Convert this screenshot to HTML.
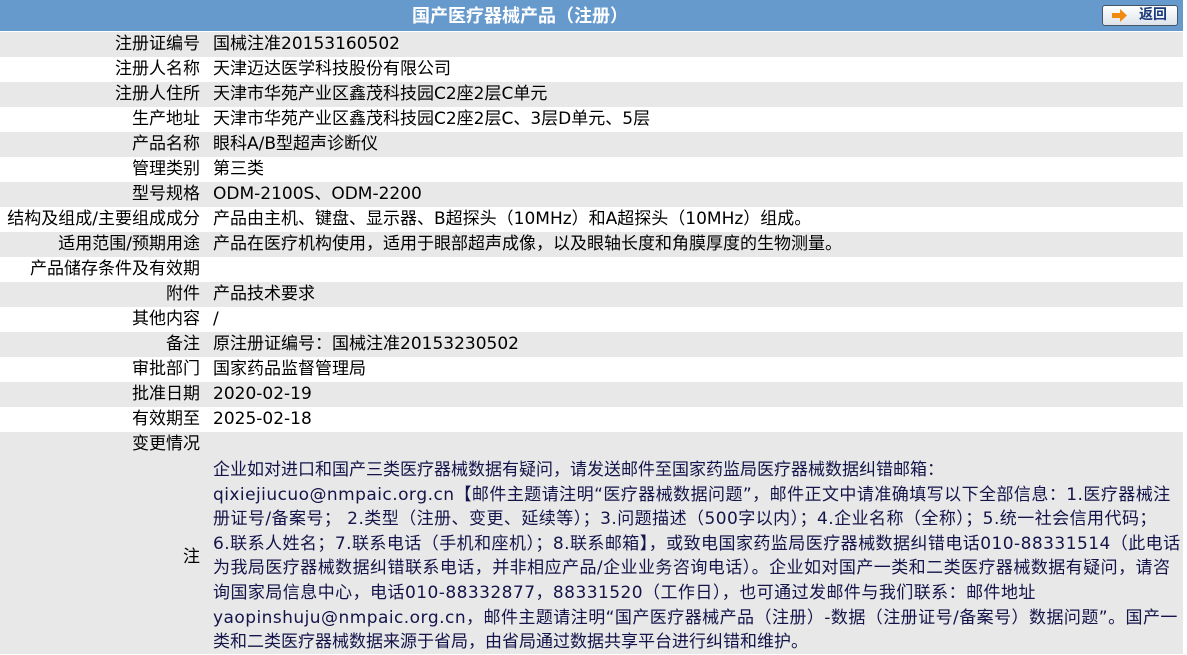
<!DOCTYPE html>
<html><head><meta charset="utf-8"><style>
body{margin:0;background:#fff;font-family:"DejaVu Sans","Noto Sans CJK SC",sans-serif;font-size:17px;color:#000;width:1187px;height:654px;overflow:hidden;position:relative;font-kerning:none}
.hd{position:absolute;left:0;top:0;width:1183px;height:31px;background:#6699cc}
.hd .t{position:absolute;left:0;width:1040px;top:0;line-height:33px;text-align:center;color:#fff;font-weight:bold;font-size:18px}
.btn{position:absolute;left:1102px;top:5px;width:76px;height:21px;border:1px solid #456;border-radius:3px;background:linear-gradient(#fff,#dde3ea);box-sizing:border-box}
.btn b{position:absolute;left:36px;top:0;line-height:19px;font-size:14px;color:#1a3a7a}
.row{position:absolute;left:0;width:1183px;height:25px;line-height:25px;white-space:nowrap}
.g{background:#e8e8e8}
.l{position:absolute;right:983px;top:0;text-align:right}
.v{position:absolute;left:213px;top:0}
.note{position:absolute;left:0;top:457px;width:1183px;height:197px;background:#e8e8e8}
.note .v{top:1px;line-height:24.6px;color:#14144a;white-space:nowrap}
.note .v span{display:block;letter-spacing:.45px}
</style></head><body>
<div class="hd"><div class="t">国产医疗器械产品（注册）</div>
<div class="btn"><svg style="position:absolute;left:9px;top:3px" width="16" height="13" viewBox="0 0 16 13"><path d="M0 4h8V0l7 6.5-7 6.5V9H0z" fill="#f08a10"/></svg><b>返回</b></div></div>
<div class="row g" style="top:32px"><span class="l">注册证编号</span><span class="v">国械注准20153160502</span></div>
<div class="row" style="top:57px"><span class="l">注册人名称</span><span class="v">天津迈达医学科技股份有限公司</span></div>
<div class="row g" style="top:82px"><span class="l">注册人住所</span><span class="v">天津市华苑产业区鑫茂科技园C2座2层C单元</span></div>
<div class="row" style="top:107px"><span class="l">生产地址</span><span class="v">天津市华苑产业区鑫茂科技园C2座2层C、3层D单元、5层</span></div>
<div class="row g" style="top:132px"><span class="l">产品名称</span><span class="v">眼科A/B型超声诊断仪</span></div>
<div class="row" style="top:157px"><span class="l">管理类别</span><span class="v">第三类</span></div>
<div class="row g" style="top:182px"><span class="l">型号规格</span><span class="v">ODM-2100S、ODM-2200</span></div>
<div class="row" style="top:207px"><span class="l">结构及组成/主要组成成分</span><span class="v">产品由主机、键盘、显示器、B超探头（10MHz）和A超探头（10MHz）组成。</span></div>
<div class="row g" style="top:232px"><span class="l">适用范围/预期用途</span><span class="v">产品在医疗机构使用，适用于眼部超声成像，以及眼轴长度和角膜厚度的生物测量。</span></div>
<div class="row" style="top:257px"><span class="l">产品储存条件及有效期</span><span class="v"></span></div>
<div class="row g" style="top:282px"><span class="l">附件</span><span class="v">产品技术要求</span></div>
<div class="row" style="top:307px"><span class="l">其他内容</span><span class="v">/</span></div>
<div class="row g" style="top:332px"><span class="l">备注</span><span class="v">原注册证编号：国械注准20153230502</span></div>
<div class="row" style="top:357px"><span class="l">审批部门</span><span class="v">国家药品监督管理局</span></div>
<div class="row g" style="top:382px"><span class="l">批准日期</span><span class="v">2020-02-19</span></div>
<div class="row" style="top:407px"><span class="l">有效期至</span><span class="v">2025-02-18</span></div>
<div class="row g" style="top:432px"><span class="l">变更情况</span><span class="v"></span></div>
<div class="note"><span class="l" style="top:88px;line-height:25px">注</span><div class="v"><span style="letter-spacing:0">企业如对进口和国产三类医疗器械数据有疑问，请发送邮件至国家药监局医疗器械数据纠错邮箱：</span><span>qixiejiucuo@nmpaic.org.cn【邮件主题请注明“医疗器械数据问题”，邮件正文中请准确填写以下全部信息：1.医疗器械注</span><span>册证号/备案号； 2.类型（注册、变更、延续等）；3.问题描述（500字以内）；4.企业名称（全称）；5.统一社会信用代码；</span><span>6.联系人姓名；7.联系电话（手机和座机）；8.联系邮箱】，或致电国家药监局医疗器械数据纠错电话010-88331514（此电话</span><span>为我局医疗器械数据纠错联系电话，并非相应产品/企业业务咨询电话）。企业如对国产一类和二类医疗器械数据有疑问，请咨</span><span>询国家局信息中心，电话010-88332877，88331520（工作日），也可通过发邮件与我们联系：邮件地址</span><span>yaopinshuju@nmpaic.org.cn，邮件主题请注明“国产医疗器械产品（注册）-数据（注册证号/备案号）数据问题”。国产一</span><span style="letter-spacing:0">类和二类医疗器械数据来源于省局，由省局通过数据共享平台进行纠错和维护。</span></div></div>
</body></html>
